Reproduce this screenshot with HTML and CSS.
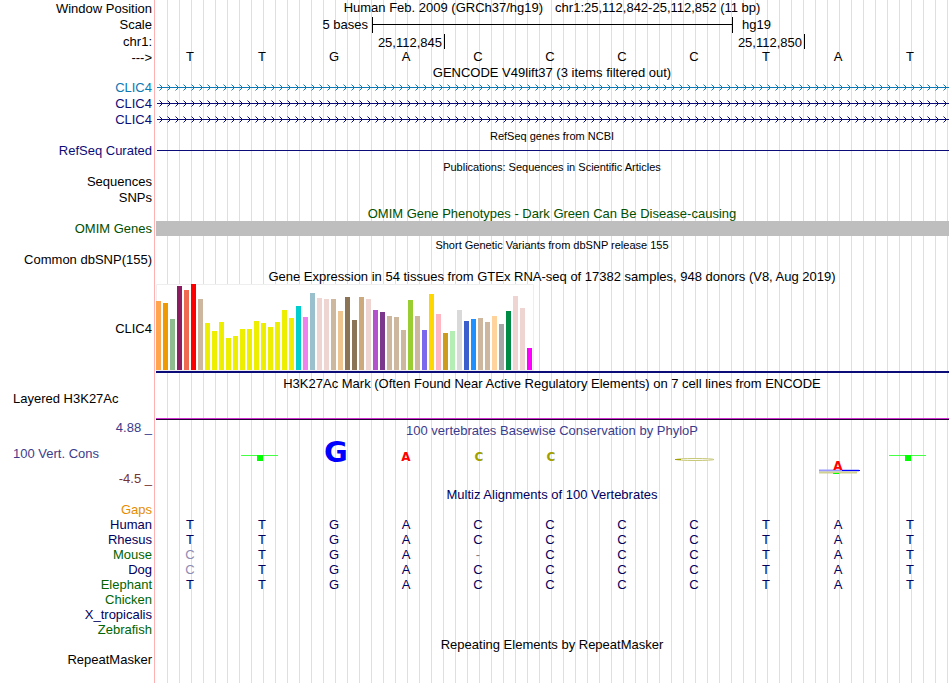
FILE: index.html
```html
<!DOCTYPE html>
<html lang="en">
<head>
<meta charset="utf-8">
<title>chr1:25,112,842-25,112,852 - Genome Browser</title>
<link rel="stylesheet" href="styles.css">
</head>
<body>
<main class="browser">
  <div class="row heading"><div class="label">Window Position</div><h1 class="title position"><span>Human Feb. 2009 (GRCh37/hg19)</span><span>chr1:25,112,842-25,112,852 (11 bp)</span></h1></div>
  <div class="row ruler-row"><div class="label">Scale</div><div class="ruler"><span class="scale-name">5 bases</span><span class="scale-bar"></span><span class="assembly">hg19</span></div></div>
  <div class="row ruler-row"><div class="label">chr1:</div><div class="ruler"><span class="tick first">25,112,845</span><span class="tick second">25,112,850</span></div></div>
  <div class="row"><div class="label">---&gt;</div><div class="bases reference"><span>T</span><span>T</span><span>G</span><span>A</span><span>C</span><span>C</span><span>C</span><span>C</span><span>T</span><span>A</span><span>T</span></div></div>

  <h2 class="title gencode-title">GENCODE V49lift37 (3 items filtered out)</h2>
  <div class="row teal"><div class="label">CLIC4</div>
    <svg class="gene" aria-hidden="true"><defs><pattern id="arrow" width="8" height="16" patternUnits="userSpaceOnUse"><path d="M2.5 4.5l3 3-3 3" fill="none" stroke="#0c78b4"/></pattern></defs><rect width="100%" height="16" fill="url(#arrow)"/><rect y="7" width="100%" height="1" fill="#0c78b4"/></svg></div>
  <div class="row navy"><div class="label">CLIC4</div>
    <svg class="gene" aria-hidden="true"><defs><pattern id="arrow-navy" width="8" height="16" patternUnits="userSpaceOnUse"><path d="M2.5 4.5l3 3-3 3" fill="none" stroke="#0c0c78"/></pattern></defs><rect width="100%" height="16" fill="url(#arrow-navy)"/><rect y="7" width="100%" height="1" fill="#0c0c78"/></svg></div>
  <div class="row navy"><div class="label">CLIC4</div>
    <svg class="gene" aria-hidden="true"><rect width="100%" height="16" fill="url(#arrow-navy)"/><rect y="7" width="100%" height="1" fill="#0c0c78"/></svg></div>

  <h2 class="title small">RefSeq genes from NCBI</h2>
  <div class="row navy"><div class="label">RefSeq Curated</div>
    <svg class="gene" aria-hidden="true"><rect y="7" width="100%" height="1" fill="#0c0c78"/></svg></div>

  <h2 class="title small">Publications: Sequences in Scientific Articles</h2>
  <div class="row"><div class="label">Sequences</div></div>
  <div class="row"><div class="label">SNPs</div></div>

  <h2 class="title green">OMIM Gene Phenotypes - Dark Green Can Be Disease-causing</h2>
  <div class="row green"><div class="label">OMIM Genes</div><div class="omim"></div></div>

  <h2 class="title small">Short Genetic Variants from dbSNP release 155</h2>
  <div class="row"><div class="label">Common dbSNP(155)</div></div>

  <h2 class="title expression-title">Gene Expression in 54 tissues from GTEx RNA-seq of 17382 samples, 948 donors (V8, Aug 2019)</h2>
  <div class="row expression"><div class="label">CLIC4</div>
    <div class="chart">
      <svg class="bars" viewBox="0 0 378 87" role="img" aria-label="Expression by tissue">
        <rect width="378" height="87" fill="#fff"/><path d="M.5 87V.5H377.5V86.5H0" fill="none" stroke="#eee"/>
        <g id="bars"></g>
      </svg>
    </div></div>

  <h2 class="title histone-title">H3K27Ac Mark (Often Found Near Active Regulatory Elements) on 7 cell lines from ENCODE</h2>
  <div class="row histone"><div class="label left">Layered H3K27Ac</div><div class="signal"></div></div>

  <div class="row conservation">
    <div class="axis"><span>4.88 _</span><span class="left">100 Vert. Cons</span><span class="minimum">-4.5 _</span></div>
    <div class="plot">
      <h2 class="title slate">100 vertebrates Basewise Conservation by PhyloP</h2>
      <div class="bases logo">
        <span></span>
        <svg viewBox="0 0 44 36"><path d="M1 15.5H38" stroke="#4f4"/><path d="M17 15h6v6h-6z" fill="#0f0"/></svg>
        <svg viewBox="0 0 44 36"><text class="glyph-g" x="24" y="22">G</text></svg>
        <svg viewBox="0 0 44 36"><text class="glyph-a" x="22" y="21">A</text></svg>
        <svg viewBox="0 0 44 36"><text class="glyph-c" x="23" y="21">C</text></svg>
        <svg viewBox="0 0 44 36"><text class="glyph-c" x="23" y="21">C</text></svg>
        <span></span>
        <svg viewBox="0 0 44 36"><ellipse cx="23" cy="19.5" rx="19" ry="1" fill="#fff" stroke="#c8c878"/><path d="M3 19.5h6" stroke="#a0a000"/></svg>
        <span></span>
        <svg viewBox="0 0 44 36"><path d="M3 30.5h40" stroke="#99f" stroke-width="2"/><path d="M26 30.5h18" stroke="#00f"/><path d="M3 32.5h38" stroke="#d0d090" stroke-width="2"/><path d="M17 33.5h6" stroke="#0f0"/><text class="glyph-a" x="22" y="30">A</text></svg>
        <svg viewBox="0 0 44 36"><path d="M1 15.5H38" stroke="#4f4"/><path d="M17 15h6v6h-6z" fill="#0f0"/></svg>
      </div>
    </div>
  </div>

  <h2 class="title blue">Multiz Alignments of 100 Vertebrates</h2>
  <div class="alignment">
    <div class="row gaps"><div class="label">Gaps</div></div>
    <div class="row blue"><div class="label">Human</div><div class="bases"><span>T</span><span>T</span><span>G</span><span>A</span><span>C</span><span>C</span><span>C</span><span>C</span><span>T</span><span>A</span><span>T</span></div></div>
    <div class="row blue"><div class="label">Rhesus</div><div class="bases"><span>T</span><span>T</span><span>G</span><span>A</span><span>C</span><span>C</span><span>C</span><span>C</span><span>T</span><span>A</span><span>T</span></div></div>
    <div class="row forest"><div class="label">Mouse</div><div class="bases"><span class="differs">C</span><span>T</span><span>G</span><span>A</span><span class="gap">-</span><span>C</span><span>C</span><span>C</span><span>T</span><span>A</span><span>T</span></div></div>
    <div class="row blue"><div class="label">Dog</div><div class="bases"><span class="differs">C</span><span>T</span><span>G</span><span>A</span><span>C</span><span>C</span><span>C</span><span>C</span><span>T</span><span>A</span><span>T</span></div></div>
    <div class="row forest"><div class="label">Elephant</div><div class="bases"><span>T</span><span>T</span><span>G</span><span>A</span><span>C</span><span>C</span><span>C</span><span>C</span><span>T</span><span>A</span><span>T</span></div></div>
    <div class="row forest"><div class="label">Chicken</div></div>
    <div class="row blue"><div class="label">X_tropicalis</div></div>
    <div class="row forest"><div class="label">Zebrafish</div></div>
  </div>

  <h2 class="title">Repeating Elements by RepeatMasker</h2>
  <div class="row"><div class="label">RepeatMasker</div></div>
</main>
<script src="chart.js"></script>
</body>
</html>
```
FILE: styles.css
```css
* { box-sizing: border-box; }
body {
  margin: 0;
  background: #fff;
  color: #000;
  font: 13px/16px "Liberation Sans", Arial, sans-serif;
}
.browser {
  min-height: 100vh;
  background:
    linear-gradient(#ffb0b0, #ffb0b0) 154px 0 / 1px 100% no-repeat,
    repeating-linear-gradient(to right, transparent 0 11px, #dcdcf5 11px 12px) right 1px top 0 / calc(100% - 157px) 100% no-repeat;
}
.row {
  display: grid;
  grid-template-columns: 154px minmax(0, 1fr);
  min-height: 16px;
}
.label { padding-right: 2px; text-align: right; white-space: nowrap; }
.left { padding-left: 13px; text-align: left; }
.title {
  margin: 0 0 0 154px;
  padding-top: 1px;
  font-size: 13px;
  font-weight: normal;
  line-height: 14px;
  text-align: center;
  white-space: nowrap;
}
.row .title { margin-left: 0; }
.small { font-size: 11px; }
.heading { height: 16px; }
.heading .label { line-height: 18px; }
.position { display: flex; justify-content: center; gap: 12px; }
.gencode-title { padding-top: 0; }

.ruler-row { height: 17px; line-height: 17px; }
.ruler-row .label { line-height: 18px; }
.ruler, .bases { display: grid; grid-template-columns: repeat(11, minmax(0, 1fr)); }
.ruler { padding: 0 2px; }
.scale-name { grid-column: span 3; padding-right: 4px; text-align: right; }
.scale-bar {
  grid-column: span 5;
  height: 16px;
  margin: 1px -1px 0 0;
  border: solid #000;
  border-width: 0 1px;
  background: linear-gradient(#000, #000) 0 7px / 100% 1px no-repeat;
}
.assembly { grid-column: span 3; padding-left: 10px; }
.tick {
  height: 15px;
  margin: 1px -1px 0 0;
  padding-right: 2px;
  border-right: 1px solid #000;
  text-align: right;
}
.first { grid-column: span 4; }
.second { grid-column: span 5; }
.bases { padding-right: 4px; text-align: center; }
.reference { line-height: 14px; }

.gene { display: block; width: calc(100% - 4px); height: 16px; margin-left: 3px; }
.omim { height: 15px; margin: 0 1px 0 2px; background: #bebebe; }

.expression-title { line-height: 15px; }
.expression { height: 89px; align-items: center; }
.chart { height: 89px; margin: 0 1px 0 2px; border-bottom: 2px solid #0c0c78; }
.bars { display: block; width: 378px; height: 87px; }
.histone-title { padding-top: 4px; }
.histone { height: 29px; align-items: start; }
.signal { align-self: end; height: 2px; margin: 0 1px 0 2px; border-top: 1px solid #d030d0; border-bottom: 1px solid #200030; }

.conservation { height: 67px; color: #3c3c8c; }
.axis { display: flex; flex-direction: column; justify-content: space-between; height: 67px; padding-right: 2px; text-align: right; }
.minimum { color: #783232; }
.conservation .title { line-height: 19px; }
.logo svg { display: block; width: 44px; height: 36px; margin: 0 auto; overflow: visible; }
.logo text { font-family: "DejaVu Sans", sans-serif; text-anchor: middle; }
.glyph-g { fill: #00f; font-size: 29px; font-weight: bold; }
.glyph-a { fill: #f00; font-size: 12px; font-weight: bold; }
.glyph-c { fill: #a0a000; font-size: 12px; font-weight: bold; }

.alignment .row { min-height: 15px; line-height: 15px; }
.alignment .bases { color: #000060; }
.alignment .differs { color: #8c8cb4; }
.alignment .gap { color: #808080; }
.teal { color: #0c78b4; }
.navy { color: #0c0c78; }
.green { color: #005000; }
.forest { color: #006400; }
.blue { color: #000060; }
.slate { color: #3c3c8c; }
.gaps { color: #e68c00; }
```
FILE: chart.js
```js
// Median expression per tissue: [height, colour], in display order.
const tissues = [
  [69, '#ffa54f'], [67, '#ee9a00'], [51, '#8fbc8f'], [84, '#8b1c62'], [80, '#ee6a50'], [86, '#ff0000'], [71, '#cdb79e'],
  [47, '#eeee00'], [39, '#eeee00'], [48, '#eeee00'], [32, '#eeee00'], [34, '#eeee00'], [41, '#eeee00'], [41, '#eeee00'],
  [49, '#eeee00'], [47, '#eeee00'], [43, '#eeee00'], [48, '#eeee00'], [60, '#eeee00'], [52, '#eeee00'], [64, '#00cdcd'],
  [53, '#ee82ee'], [77, '#9ac0cd'], [72, '#eed5d2'], [71, '#eed5d2'], [71, '#cdb79e'], [59, '#eec591'], [73, '#8b7355'],
  [50, '#8b7355'], [73, '#cdaa7d'], [71, '#eed5d2'], [60, '#b452cd'], [58, '#7a378b'], [54, '#cdb79e'], [53, '#cdb79e'],
  [40, '#cdb79e'], [70, '#9acd32'], [54, '#cdb79e'], [40, '#7a67ee'], [76, '#ffd700'], [56, '#ffb6c1'], [37, '#cd9b1d'],
  [39, '#b4eeb4'], [60, '#d9d9d9'], [49, '#3a5fcd'], [51, '#1e90ff'], [52, '#cdb79e'], [48, '#cdb79e'], [54, '#ffd39b'],
  [46, '#a6a6a6'], [59, '#008b45'], [74, '#eed5d2'], [62, '#eed5d2'], [22, '#ff00ff']
];
const group = document.getElementById('bars');
tissues.forEach(([height, colour], index) => {
  const bar = document.createElementNS('http://www.w3.org/2000/svg', 'rect');
  bar.setAttribute('x', index * 7);
  bar.setAttribute('y', 86 - height);
  bar.setAttribute('width', 5);
  bar.setAttribute('height', height);
  bar.setAttribute('fill', colour);
  group.append(bar);
});
```
